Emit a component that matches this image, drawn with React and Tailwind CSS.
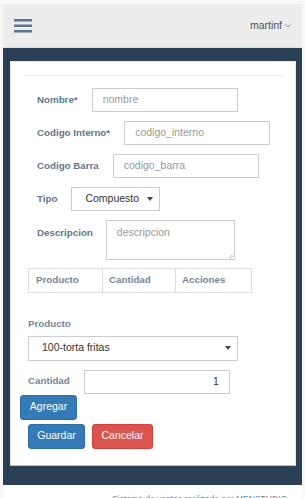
import React from 'react';

const font = { fontFamily: '"Liberation Sans", Arial, sans-serif' };

const Field = ({ label, placeholder, width = 'w-[146px]' }) => (
  <div className="flex items-center gap-[14px] pl-[26px]">
    <span className="text-[9.75px] font-bold text-[#607790]">{label}</span>
    <div
      className={`${width} h-[24px] border border-[#ccc] bg-white px-[10px] flex items-center text-[10.5px] text-[#999]`}
    >
      {placeholder}
    </div>
  </div>
);

const Caret = () => (
  <svg width="6" height="4" viewBox="0 0 6 4" className="shrink-0">
    <path d="M0 0h6L3 4z" fill="#444" />
  </svg>
);

export default function App() {
  return (
    <div className="h-[498px] bg-[#f7f7f7] px-[3px] pt-[4px] overflow-hidden" style={font}>
      {/* Top nav */}
      <div className="h-[44px] bg-[#ededed] border-b border-[#d9dee4] flex items-center justify-between pl-[11px] pr-[11px]">
        <svg width="18" height="14" viewBox="0 0 18 14">
          <rect x="0" y="0" width="18" height="2.5" fill="#5a738e" />
          <rect x="0" y="5.5" width="18" height="2.5" fill="#5a738e" />
          <rect x="0" y="11" width="18" height="2.5" fill="#5a738e" />
        </svg>
        <div className="flex items-center gap-[3px] text-[10.5px] text-[#515356]">
          <span>martinf</span>
          <svg width="6" height="4" viewBox="0 0 6 4">
            <path d="M0.5 0.5L3 3L5.5 0.5" fill="none" stroke="#777" strokeWidth="0.8" />
          </svg>
        </div>
      </div>

      {/* Main dark area */}
      <div className="bg-[#2a3f54] pt-[13px] pb-[19px] pl-[7px] pr-[6px]">
        <div className="bg-white border border-[#e6e9ed] border-b-[#b9c0c8] pt-[13px] pb-[16px]">
          <div className="mx-[13px] h-px bg-[#e5e5e5]" />

          <div className="mt-[12px] flex flex-col gap-[9px]">
            <Field label="Nombre*" placeholder="nombre" />
            <Field label="Codigo Interno*" placeholder="codigo_interno" />
            <Field label="Codigo Barra" placeholder="codigo_barra" />

            <div className="flex items-center gap-[14px] pl-[26px]">
              <span className="text-[9.75px] font-bold text-[#607790]">Tipo</span>
              <div className="w-[89px] h-[24px] border border-[#ccc] bg-white pl-[13px] pr-[6px] flex items-center justify-between text-[10.5px] text-[#333]">
                <span>Compuesto</span>
                <Caret />
              </div>
            </div>

            <div className="flex items-start gap-[13px] pl-[26px]">
              <span className="text-[9.75px] font-bold text-[#607790] pt-[6px]">Descripcion</span>
              <div className="relative w-[129px] h-[40px] border border-[#ccc] bg-white px-[10px] pt-[4px] text-[10.5px] text-[#999]">
                descripcion
                <svg width="4" height="4" viewBox="0 0 4 4" className="absolute right-[1px] bottom-[1px]">
                  <path d="M0 4L4 0M2 4L4 2" stroke="#999" strokeWidth="0.6" />
                </svg>
              </div>
            </div>
          </div>

          {/* Table */}
          <div className="ml-[17px] mt-[8px] w-[224px] h-[25px] border border-[#ddd] flex text-[9.75px] font-bold text-[#73879c]">
            <div className="w-[74px] border-r border-[#ddd] pl-[7px] flex items-center">Producto</div>
            <div className="w-[73px] border-r border-[#ddd] pl-[6px] flex items-center">Cantidad</div>
            <div className="flex-1 pl-[6px] flex items-center">Acciones</div>
          </div>

          {/* Producto */}
          <div className="ml-[17px] mt-[24px] text-[9.75px] font-bold text-[#73879c]">Producto</div>
          <div className="ml-[17px] mt-[4px] w-[210px] h-[25px] border border-[#ccc] bg-white pl-[13px] pr-[6px] flex items-center justify-between text-[10.5px] text-[#333]">
            <span>100-torta fritas</span>
            <Caret />
          </div>

          <div className="ml-[17px] mt-[9px] flex items-center gap-[14px]">
            <span className="text-[9.75px] font-bold text-[#73879c]">Cantidad</span>
            <div className="w-[146px] h-[24px] border border-[#ccc] bg-white px-[10px] flex items-center justify-end text-[10.5px] text-[#333]">
              1
            </div>
          </div>

          <div className="ml-[9px] mt-[1px]">
            <div className="w-[57px] h-[25px] rounded-[3px] bg-[#337ab7] border border-[#2e6da4] flex items-center justify-center text-[10.5px] text-white">
              Agregar
            </div>
          </div>

          <div className="ml-[17px] mt-[4px] flex gap-[7px]">
            <div className="w-[57px] h-[25px] rounded-[3px] bg-[#337ab7] border border-[#2e6da4] flex items-center justify-center text-[10.5px] text-white">
              Guardar
            </div>
            <div className="w-[61px] h-[25px] rounded-[3px] bg-[#d9534f] border border-[#d43f3a] flex items-center justify-center text-[10.5px] text-white">
              Cancelar
            </div>
          </div>
        </div>
      </div>

      {/* Footer */}
      <div className="bg-white h-[40px] pt-[9px] pr-[15px] flex justify-end text-[8.5px] leading-[10px] text-[#73879c]">
        Sistema de ventas realizado por MENSTUDIO
      </div>
    </div>
  );
}
